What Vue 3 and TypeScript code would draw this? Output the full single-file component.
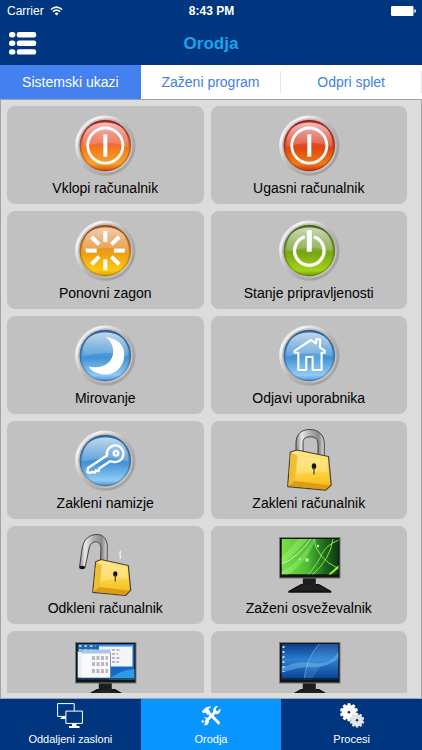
<script setup lang="ts">
import { ref } from 'vue'

interface Command {
  icon: string
  label?: string
  hint?: string
  face?: string
}

const sections: string[] = ['Sistemski ukazi', 'Zaženi program', 'Odpri splet']
const activeSection = ref<number>(0)

const commands: Command[] = [
  { icon: 'bar', label: 'Vklopi računalnik', face: 'amber' },
  { icon: 'bar', label: 'Ugasni računalnik', face: 'red' },
  { icon: 'sun', label: 'Ponovni zagon', face: 'gold' },
  { icon: 'power', label: 'Stanje pripravljenosti', face: 'green' },
  { icon: 'moon', label: 'Mirovanje', face: 'blue' },
  { icon: 'house', label: 'Odjavi uporabnika', face: 'blue' },
  { icon: 'key', label: 'Zakleni namizje', face: 'blue' },
  { icon: 'locked', label: 'Zakleni računalnik' },
  { icon: 'unlocked', label: 'Odkleni računalnik' },
  { icon: 'saver', label: 'Zaženi osveževalnik' },
  { icon: 'windows', hint: 'Okna' },
  { icon: 'desktop', hint: 'Namizje' },
]

const rays: number[] = [0, 45, 90, 135, 180, 225, 270, 315]
const teeth: number[] = [0, 36, 72, 108, 144, 180, 216, 252, 288, 324]

const pages = [
  { id: 'screens', label: 'Oddaljeni zasloni' },
  { id: 'tools', label: 'Orodja' },
  { id: 'processes', label: 'Procesi' },
]
const activePage = ref<string>('tools')
</script>

<template>
  <div class="app">
    <svg class="defs" width="0" height="0" aria-hidden="true">
      <defs>
        <linearGradient id="rim" x1="0" y1="0" x2="1" y2="1">
          <stop offset="0" stop-color="#bdbdbd" />
          <stop offset=".2" stop-color="#f4f4f4" />
          <stop offset=".5" stop-color="#bab7b6" />
          <stop offset=".8" stop-color="#a29f9e" />
          <stop offset="1" stop-color="#c4c2c1" />
        </linearGradient>
        <linearGradient id="rim-inner" x1="0" y1="0" x2="1" y2="1">
          <stop offset="0" stop-color="#cdcaca" />
          <stop offset=".6" stop-color="#b4b0b0" />
          <stop offset="1" stop-color="#d8d5d4" />
        </linearGradient>
        <linearGradient id="face-amber" x1="0" y1="0" x2="0" y2="1">
          <stop offset="0" stop-color="#d62a26" />
          <stop offset=".47" stop-color="#ee6a3c" />
          <stop offset=".55" stop-color="#f27a1c" />
          <stop offset=".85" stop-color="#fba12a" />
          <stop offset="1" stop-color="#d84a14" />
        </linearGradient>
        <linearGradient id="face-red" x1="0" y1="0" x2="0" y2="1">
          <stop offset="0" stop-color="#d62a28" />
          <stop offset=".47" stop-color="#de4c2c" />
          <stop offset=".55" stop-color="#de4810" />
          <stop offset=".85" stop-color="#f27a18" />
          <stop offset="1" stop-color="#c83410" />
        </linearGradient>
        <linearGradient id="face-gold" x1="0" y1="0" x2="0" y2="1">
          <stop offset="0" stop-color="#cf6a18" />
          <stop offset=".47" stop-color="#e8922a" />
          <stop offset=".55" stop-color="#ec9e10" />
          <stop offset=".88" stop-color="#ffca10" />
          <stop offset="1" stop-color="#dc9a0c" />
        </linearGradient>
        <linearGradient id="face-green" x1="0" y1="0" x2="0" y2="1">
          <stop offset="0" stop-color="#5f8620" />
          <stop offset=".46" stop-color="#80a836" />
          <stop offset=".54" stop-color="#76a612" />
          <stop offset=".88" stop-color="#a2d418" />
          <stop offset="1" stop-color="#6c9c10" />
        </linearGradient>
        <linearGradient id="face-blue" x1="0" y1="0" x2="0" y2="1">
          <stop offset="0" stop-color="#3a84c6" />
          <stop offset=".46" stop-color="#4c98d8" />
          <stop offset=".54" stop-color="#4292d6" />
          <stop offset=".88" stop-color="#90cbf6" />
          <stop offset="1" stop-color="#4a90ce" />
        </linearGradient>
        <linearGradient id="edge" x1="0" y1="0" x2="0" y2="1">
          <stop offset="0" stop-color="#000" stop-opacity=".3" />
          <stop offset="1" stop-color="#000" stop-opacity=".18" />
        </linearGradient>
        <linearGradient id="gloss" x1="0" y1="0" x2="0" y2="1">
          <stop offset="0" stop-color="#fff" stop-opacity=".68" />
          <stop offset="1" stop-color="#fff" stop-opacity=".1" />
        </linearGradient>
        <linearGradient id="brass" x1="0" y1="0" x2="0" y2="1">
          <stop offset="0" stop-color="#ffe78a" />
          <stop offset=".5" stop-color="#fdd64a" />
          <stop offset=".8" stop-color="#f8c424" />
          <stop offset="1" stop-color="#e4a410" />
        </linearGradient>
        <linearGradient id="steel" x1="0" y1="0" x2="1" y2="0">
          <stop offset="0" stop-color="#858585" />
          <stop offset=".2" stop-color="#e8e8e8" />
          <stop offset=".5" stop-color="#b0b0b0" />
          <stop offset=".8" stop-color="#888" />
          <stop offset="1" stop-color="#dedede" />
        </linearGradient>
        <linearGradient id="screen-green" x1="0" y1="0" x2="1" y2="0">
          <stop offset="0" stop-color="#7ae048" />
          <stop offset=".45" stop-color="#4fbe34" />
          <stop offset=".75" stop-color="#1f6a1c" />
          <stop offset="1" stop-color="#0d3a12" />
        </linearGradient>
        <linearGradient id="screen-blue" x1="0" y1="0" x2="0" y2="1">
          <stop offset="0" stop-color="#0c3c86" />
          <stop offset=".45" stop-color="#2c80d4" />
          <stop offset="1" stop-color="#08408e" />
        </linearGradient>
        <clipPath id="screen-clip"><rect x="3.5" y="5" width="57" height="35.5" /></clipPath>
      </defs>
    </svg>

    <header class="top">
      <div class="status">
        <span class="carrier">
          Carrier
          <svg width="13" height="10" viewBox="0 0 13 10" aria-hidden="true">
            <path d="M.9 3.5Q6.5-1.4 12.1 3.5M2.9 5.7Q6.5 2.6 10.1 5.7" fill="none" stroke="#fff" stroke-width="1.6" />
            <path d="M4.5 7.4Q6.5 5.7 8.5 7.4L6.5 9.6Z" fill="#fff" />
          </svg>
        </span>
        <span class="clock">8:43 PM</span>
        <svg class="battery" width="25" height="10" viewBox="0 0 25 10" aria-hidden="true">
          <rect width="22.5" height="10" rx="1.2" fill="#fff" />
          <path d="M23.4 3Q25 3.5 25 5T23.4 7Z" fill="#fff" />
        </svg>
      </div>
      <div class="titlebar">
        <button class="menu" type="button" aria-label="Meni">
          <svg width="28" height="23" viewBox="0 0 28 23" aria-hidden="true">
            <g fill="#fff">
              <rect x="0" y="0" width="6.4" height="5.4" rx="2.7" /><rect x="7.8" y="0" width="19.4" height="5.4" rx="2.2" />
              <rect x="0" y="8.6" width="6.4" height="5.4" rx="2.7" /><rect x="7.8" y="8.6" width="19.4" height="5.4" rx="2.2" />
              <rect x="0" y="17.2" width="6.4" height="5.4" rx="2.7" /><rect x="7.8" y="17.2" width="19.4" height="5.4" rx="2.2" />
            </g>
          </svg>
        </button>
        <h1>Orodja</h1>
      </div>
    </header>

    <nav class="sections">
      <button
        v-for="(name, i) in sections"
        :key="name"
        type="button"
        :class="{ active: i === activeSection }"
        @click="activeSection = i"
      >{{ name }}</button>
    </nav>

    <main class="panel">
      <div class="grid">
        <button v-for="(c, i) in commands" :key="i" class="card" type="button" :aria-label="c.hint">
          <svg class="icon" width="62" height="62" viewBox="0 0 62 62" aria-hidden="true">
            <g v-if="c.face">
              <circle cx="31.3" cy="31.6" r="30.2" fill="url(#rim)" />
              <circle cx="31.3" cy="31.6" r="27.4" fill="url(#rim-inner)" />
              <circle cx="31.3" cy="31.6" r="25.7" :fill="`url(#face-${c.face})`" />
              <circle cx="31.3" cy="31.6" r="25" fill="none" stroke="url(#edge)" stroke-width="1.6" />
              <path d="M8.6 33Q7 9 31.3 8.4Q55.600 9 54 33Q42 28.500 31 29Q18 29.500 8.600 33Z" fill="url(#gloss)" />
            </g>

            <g v-if="c.icon === 'bar'">
              <circle cx="31.3" cy="31.6" r="17.6" fill="none" stroke="#fff" stroke-width="2.8" />
              <rect x="29.3" y="20.3" width="4" height="22.4" fill="#fff" />
            </g>
            <g v-else-if="c.icon === 'sun'" fill="#fff">
              <rect v-for="r in rays" :key="r" x="29.3" y="12" width="4" height="11" :transform="`rotate(${r} 31.3 31.6)`" />
            </g>
            <g v-else-if="c.icon === 'power'">
              <path d="M26.8 17.700A14.700 14.700 0 1 0 35.800 17.700" fill="none" stroke="#fff" stroke-width="3.3" />
              <rect x="28.8" y="11.3" width="5" height="21.4" fill="#fff" />
            </g>
            <path v-else-if="c.icon === 'moon'" fill="#fff" d="M31.700 13C44 14 50.500 22 50.300 31C50 43 41 51 31 50.500C23 50 17 47 14.500 42.500C22 44.500 31 43 36 37C41.500 30 40 19 31.700 13Z" />
            <path v-else-if="c.icon === 'house'" d="M33 16L16.600 26.800V28.800H20.300V46H28.300V33H34.600V46H43.600V28.800H46.800V26.800L42 23.500V15.200H38V19.500Z" fill="#fff" fill-opacity=".12" stroke="#fff" stroke-width="2.1" stroke-linejoin="round" />
            <g v-else-if="c.icon === 'key'" fill="none" stroke="#fff" stroke-width="2.4" stroke-linejoin="round">
              <path d="M33 26.500A8.300 8.300 0 1 1 38.500 32.600L36 32.200L25.500 39.200L24.500 42L22 41.300L21 43.600L17.500 43L15.500 44L13.400 43L14 39Z" />
              <circle cx="42" cy="24.3" r="2.3" />
            </g>

            <g v-else-if="c.icon === 'locked'" stroke="#46433a" stroke-linejoin="round">
              <path d="M18 26V13C18.500 4 24.500.5 32 .5S46 5 46.300 14V29H40V15C39.800 10 37 7.800 32 7.800S25 10 25 14V25Z" fill="url(#steel)" stroke-width="1" />
              <path d="M12.300 23L19 21L50.500 27.500L53.200 56L47.500 61.200L9.700 57.600Z" fill="url(#brass)" stroke-width="1.2" />
              <path d="M12.900 23.600L19.500 27L16.500 52L10.400 57Z" fill="#eebf32" stroke="none" />
              <path d="M16.500 52L50 56.300L52.300 56.200L47.300 60.400L10.600 57Z" fill="#dc9c14" stroke="none" />
              <path d="M20 27L48.500 31L50 43Q34 41 18.500 46Z" fill="#fff" fill-opacity=".2" stroke="none" />
              <ellipse cx="36" cy="37.3" rx="2.2" ry="3" fill="#17130a" stroke="none" />
              <path d="M36 38V45.500" stroke-width="1.2" />
            </g>
            <g v-else-if="c.icon === 'unlocked'" stroke="#46433a" stroke-linejoin="round">
              <path d="M5.500 33L8 15C9.500 5 15.500.5 23 .5C30 .5 33.500 6 33.300 14L33 30H26.300L27 14C26.500 9.500 24.500 7.800 21.500 7.800C17.500 8 15.500 11 14.500 17L11 34Z" fill="url(#steel)" stroke-width="1" />
              <ellipse cx="8.2" cy="33.5" rx="2.9" ry="1.7" fill="#111" stroke="none" />
              <path d="M46.500 25Q45.500 20 46.500 16.500" fill="none" stroke="#ececec" stroke-width="1.5" />
              <path d="M21.700 27.700L27 25.500L54.300 31.500L56.700 56L51.500 61.500L18.700 58.300Z" fill="url(#brass)" stroke-width="1.2" />
              <path d="M22.300 28.200L27.500 31L25.500 53L19.400 57.700Z" fill="#eebf32" stroke="none" />
              <path d="M25.500 53L53 56.500L55.700 56.400L51.200 60.700L19.600 57.700Z" fill="#dc9c14" stroke="none" />
              <path d="M28 31L52.500 35L54 45Q39 43 26.500 48Z" fill="#fff" fill-opacity=".2" stroke="none" />
              <ellipse cx="41.3" cy="40" rx="2.1" ry="2.8" fill="#17130a" stroke="none" />
              <path d="M41.300 41V47.500" stroke-width="1.2" />
            </g>

            <g v-else-if="!c.face">
              <path d="M10.300 57L23 50H41L53.300 57V58.700H10.300Z" fill="#121212" />
              <path d="M24.800 44H37.800V51.500L31.300 53L24.800 51.500Z" fill="#1d1d1d" />
              <path d="M14 56.500L24 51.500H40L49.500 56.500Z" fill="#2b2b2b" fill-opacity=".6" />
              <rect x="1.5" y="3.5" width="60.5" height="40.5" fill="#151515" stroke="#77797a" stroke-width="1" />
              <g clip-path="url(#screen-clip)">
                <template v-if="c.icon === 'saver'">
                  <rect x="3.5" y="5" width="57" height="35.5" fill="url(#screen-green)" />
                  <path d="M3 24Q15 12 20 5H30Q18 19 3 31ZM3 38Q22 28 35 5H38Q26 32 9 41H3Z" fill="#b6f58c" fill-opacity=".35" />
                  <g fill="none" stroke="#94ee54" stroke-width=".9">
                    <path d="M30 41Q40 29 44 20T61 6M34 41Q52 26 55 5M36 5Q38 24 61 35" />
                    <path d="M4 30Q20 23 33 5" stroke="#d8ffba" />
                    <path d="M51 41Q57 36 61 32" stroke-width="2" />
                  </g>
                  <circle cx="29" cy="26" r="1.8" fill="#e0ffd0" />
                  <circle cx="40" cy="12" r="1.2" fill="#b8f890" />
                  <circle cx="22" cy="25" r="1" fill="#b8f890" />
                </template>
                <template v-else-if="c.icon === 'windows'">
                  <rect x="3.5" y="5" width="57" height="35.5" fill="#1768c4" />
                  <path d="M34 41Q45 31 61 30V41Z" fill="#2f9ae4" />
                  <path d="M5 7H22M5 11H22" stroke="#b7c9a0" stroke-width="2" stroke-dasharray="2.5 3" />
                  <rect x="25" y="6" width="33.5" height="21.5" fill="#f4f5f8" />
                  <rect x="25" y="6" width="33.5" height="1.6" fill="#5b94d4" />
                  <rect x="3.5" y="12.5" width="7" height="26" fill="#e7eef6" />
                  <rect x="7.5" y="14" width="29" height="25" fill="#fafafa" />
                  <rect x="7.5" y="10.5" width="29" height="4" fill="#a9c6e2" />
                  <path d="M18 18H34M18 20H34M18 24H34M18 26H34M18 31H34M18 33H34M38 11H46M38 15H44M38 19H46M38 23H45" stroke="#a4a4b4" stroke-width="1.3" stroke-dasharray="3 1.5" />
                  <path d="M36.500 14V39H8" fill="none" stroke="#617da0" stroke-width=".8" />
                  <rect x="3.5" y="39.2" width="57" height="1.5" fill="#123a62" />
                </template>
                <template v-else>
                  <rect x="3.5" y="5" width="57" height="35.5" fill="url(#screen-blue)" />
                  <path d="M3 29Q20 21 35 24T61 13V19Q48 29 35 28T3 34Z" fill="#8bd0fa" fill-opacity=".4" />
                  <path d="M26 41Q28 20 41 5H61V16Q40 25 34 41Z" fill="#8cc8ff" fill-opacity=".18" />
                  <path d="M26 41Q28 20 41 5" fill="none" stroke="#8ac6f4" stroke-opacity=".7" stroke-width=".8" />
                  <path d="M5.500 7V33" stroke="#c3d9e8" stroke-width="2" stroke-dasharray="2 3" />
                  <rect x="3.5" y="39" width="57" height="1.7" fill="#0b2750" />
                </template>
              </g>
            </g>
          </svg>
          <span v-if="c.label" class="label">{{ c.label }}</span>
        </button>
      </div>
    </main>

    <nav class="pages">
      <button
        v-for="p in pages"
        :key="p.id"
        type="button"
        :class="{ active: p.id === activePage }"
        @click="activePage = p.id"
      >
        <svg width="26" height="26" viewBox="0 0 26 26" aria-hidden="true">
          <g v-if="p.id === 'screens'">
            <path d="M.6.6H17.200V13.400H.6Z" fill="#00367f" stroke="#fff" stroke-width="1" />
            <path d="M6.500 13.500H9V16H3.500V15Z" fill="#fff" />
            <path d="M8.900 8.100H25.400V20.400H8.900Z" fill="#00367f" stroke="#fff" stroke-width="1" />
            <path d="M15 20.500H19.500V23H22.500V25H12V23H15Z" fill="#fff" />
          </g>
          <g v-else-if="p.id === 'tools'" fill="#fff">
            <path d="M10 9L20.500 19.800" fill="none" stroke="#fff" stroke-width="3" stroke-linecap="round" />
            <path d="M17.800 8.500L8 18.300" fill="none" stroke="#fff" stroke-width="3" />
            <path d="M3.800 8.600L5.600 6.800Q8.200 3.300 12.800 3.600L13 4.600Q10.800 4.900 10.600 6.400L12.500 9.300L9.600 12L7.400 9.600L5.500 10.500Z" />
            <path d="M20.200 3.200A4.300 4.300 0 0 0 15.200 8.600L18.200 11.200A4.300 4.300 0 0 0 22.300 5.600L19.900 7.900L18 7.500L17.800 5.500Z" />
            <path d="M4.200 16.600L6.300 18.700L8 18L8 16L6 14.400A4.200 4.200 0 0 1 10.900 19.600A4.200 4.200 0 0 1 5.800 22L7.700 20L6.200 18.900L4 20Q3.200 18 4.200 16.600Z" />
          </g>
          <g v-else>
            <g fill="#fff">
              <rect v-for="t in teeth" :key="t" x="8.4" y=".2" width="3.2" height="4" rx=".6" :transform="`rotate(${t} 10 9.2)`" />
              <circle cx="10" cy="9.2" r="7.3" />
            </g>
            <g fill="#e4e4e4">
              <rect v-for="t in teeth" :key="t" x="16.7" y="10" width="2.6" height="3.5" rx=".5" :transform="`rotate(${t} 18 17.3)`" />
              <circle cx="18" cy="17.3" r="5.9" />
            </g>
            <circle cx="10" cy="9.2" r="1.3" fill="#00367f" />
            <circle cx="18" cy="17.3" r="1.2" fill="#00367f" />
          </g>
        </svg>
        <span>{{ p.label }}</span>
      </button>
    </nav>
  </div>
</template>

<style>
body {
  margin: 0;
}
</style>

<style scoped>
.app {
  display: flex;
  flex-direction: column;
  height: 100vh;
  background: #dcdcdc;
  color: #000;
  font-family: "Liberation Sans", Arial, sans-serif;
}

.defs {
  position: absolute;
}

button {
  margin: 0;
  padding: 0;
  border: 0;
  background: none;
  color: inherit;
  font: inherit;
  cursor: pointer;
}

.top {
  flex: none;
  background: #00367f;
  color: #fff;
}

.status {
  display: grid;
  grid-template-columns: 1fr auto 1fr;
  align-items: center;
  height: 22px;
  padding: 0 6px 0 7px;
  font-size: 12px;
}

.carrier {
  display: flex;
  align-items: center;
  gap: 6px;
}

.clock {
  font-weight: 700;
}

.battery {
  justify-self: end;
}

.titlebar {
  display: grid;
  grid-template-columns: 1fr auto 1fr;
  align-items: center;
  height: 43px;
  padding: 0 9px;
}

.menu {
  display: flex;
  justify-self: start;
}

h1 {
  margin: 0;
  color: #18a4ee;
  font-size: 17px;
  line-height: 20px;
}

.sections {
  display: grid;
  grid-template-columns: repeat(3, 1fr);
  flex: none;
  height: 34px;
  background: #fff;
  color: #4580e4;
  font-size: 14px;
}

.sections button {
  border: solid transparent;
  border-width: 0 1px 0 0;
  border-image: linear-gradient(transparent 20%, #e4e4e4 20%, #e4e4e4 80%, transparent 80%) 1;
}

.sections .active {
  border: 0;
  background: #4480ee;
  color: #fff;
}

.panel {
  flex: 1;
  min-height: 0;
  box-sizing: border-box;
  padding: 6px 14px 5px 6px;
  border: 1px solid #a2a2a2;
}

.grid {
  display: grid;
  grid-template-columns: 1fr 1fr;
  grid-auto-rows: 98px;
  gap: 7px;
  height: 100%;
  overflow: hidden;
}

.card {
  display: flex;
  flex-direction: column;
  align-items: center;
  padding-top: 8px;
  border-radius: 8px;
  background: #c1c1c1;
}

.icon {
  flex: none;
  overflow: visible;
}

.label {
  margin-top: 2px;
  font-size: 14px;
  line-height: 20px;
}

.pages {
  display: grid;
  grid-template-columns: repeat(3, 1fr);
  flex: none;
  height: 51px;
  background: #00367f;
  color: #fff;
  font-size: 11px;
  line-height: 14px;
}

.pages button {
  display: flex;
  flex-direction: column;
  align-items: center;
  justify-content: center;
  gap: 3px;
}

.pages .active {
  background: #0a96ff;
}
</style>
